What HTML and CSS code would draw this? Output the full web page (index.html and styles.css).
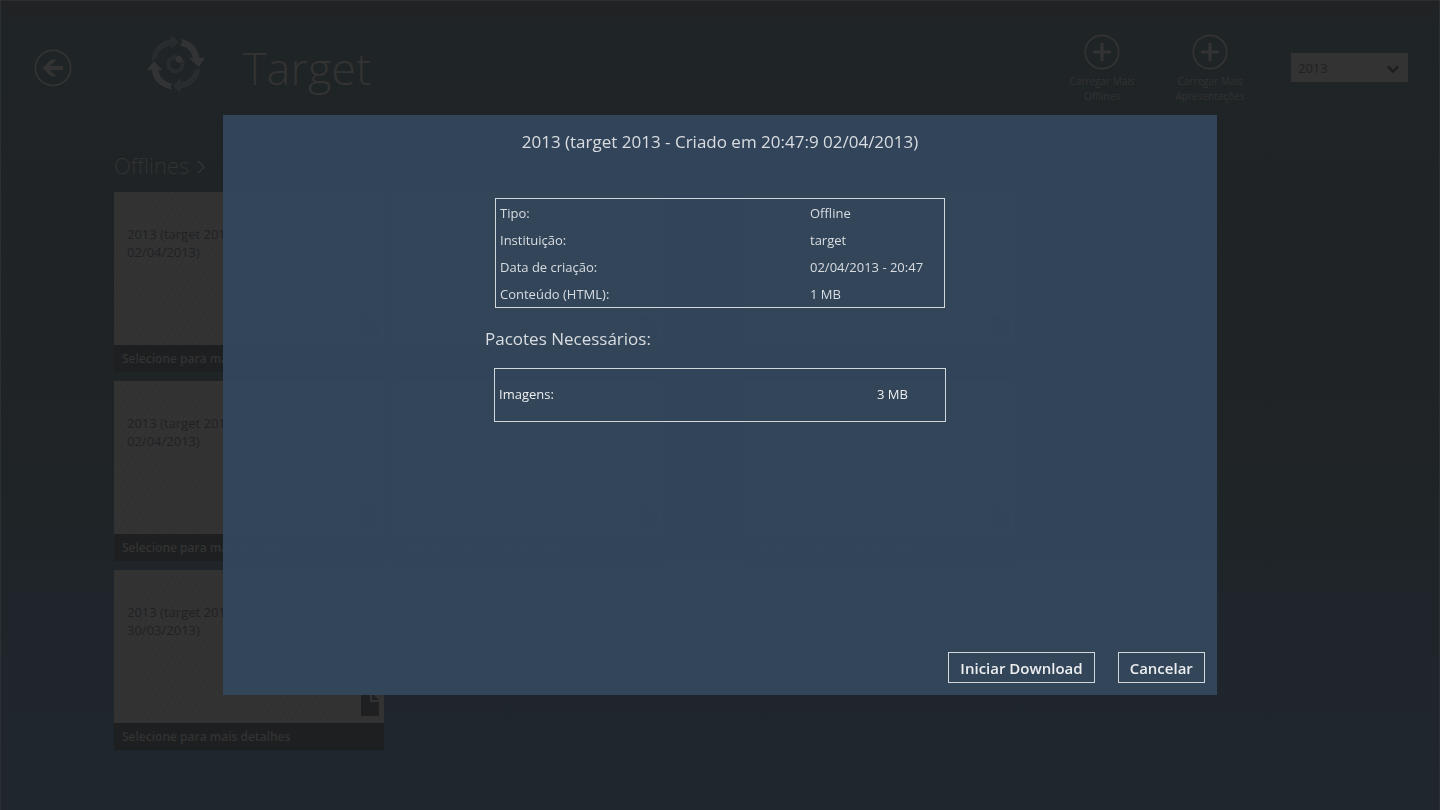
FILE: index.html
```html
<!DOCTYPE html>
<html lang="pt">
<head>
<meta charset="utf-8">
<title>Target</title>
<link rel="stylesheet" href="styles.css">
</head>
<body>
<svg class="sprite" aria-hidden="true">
  <symbol id="doc" viewBox="0 0 18 23"><path d="M0 0h9v9h9v14H0z"/><path d="M11 0l7 7h-7z"/></symbol>
  <symbol id="plus" viewBox="0 0 36 36"><circle cx="18" cy="18" r="16.7" fill="none" stroke="currentColor" stroke-width="1.8"/><path d="M16.4 9h3.2v7.4H27v3.2h-7.4V27h-3.2v-7.4H9v-3.2h7.4z" fill="currentColor"/></symbol>
  <symbol id="chevron" viewBox="0 0 8 14"><path d="M1 1l6 6-6 6" fill="none" stroke="currentColor" stroke-width="1.500"/></symbol>
</svg>
<div class="page">
  <header class="header">
    <button class="back" type="button" aria-label="Voltar">
      <svg viewBox="0 0 38 38"><circle cx="19" cy="19" r="17.6" fill="none" stroke="currentColor" stroke-width="1.800"/><path d="M8.500 19l8.500-8.500h5.500L16 17h13v4.200H16l6.500 6.300H17z" fill="currentColor"/></svg>
    </button>
    <svg class="logo" viewBox="0 0 60 60" aria-hidden="true">
      <path class="logo-dim" d="M23.700 .3L32.300 8l-8.600 7.500V11.500C17 13 11.500 17 9.700 23.700L4.700 27C5 15 13 7 23.700 5.500z"/>
      <path class="logo-lit" d="M33.700 5C44 6.500 51 14 52.300 23.700h5.500L52 33l-10.300-9.300h4C44 17 40 12.500 32.500 11.500l2.800-3z"/>
      <path class="logo-dim" d="M53.500 34c-1 11-9 19-19.800 20.500V59.500L25.700 52l8-8.500v5C40 47 45.500 43 47.300 36z"/>
      <path class="logo-lit" d="M25.300 55.500C14 54 6 47 4.700 36.300H-.3L7 27l8.500 9.300h-4C13 44 17.500 48.500 25.500 49.500l-2 3z"/>
      <circle class="logo-ring" cx="28.500" cy="30" r="7.300"/>
      <circle class="logo-lit" cx="32" cy="25.300" r="3.400"/>
    </svg>
    <h1 class="title">Target</h1>
    <nav class="actions">
      <button class="action" type="button"><svg><use href="#plus"/></svg><span>Carregar Mais Offlines</span></button>
      <button class="action" type="button"><svg><use href="#plus"/></svg><span>Carregar Mais Apresentações</span></button>
      <div class="year">
        <select aria-label="Ano"><option>2013</option></select>
        <svg viewBox="0 0 12 8" aria-hidden="true"><path d="M1 1.500l5 5 5-5" fill="none" stroke="currentColor" stroke-width="2.400"/></svg>
      </div>
    </nav>
  </header>
  <main class="groups">
    <section>
      <h2 class="group-title">Offlines <svg><use href="#chevron"/></svg></h2>
      <div class="cards">
        <article class="card"><div class="card-body"><p>2013 (target 2013 - Criado em 20:47:9 02/04/2013)</p><svg><use href="#doc"/></svg></div><div class="card-foot">Selecione para mais detalhes</div></article>
        <article class="card"><div class="card-body"><p>2013 (target 2013 - Criado em 1:25:2 02/04/2013)</p><svg><use href="#doc"/></svg></div><div class="card-foot">Selecione para mais detalhes</div></article>
        <article class="card"><div class="card-body"><p>2013 (target 2013 - Criado em 3:23:0 30/03/2013)</p><svg><use href="#doc"/></svg></div><div class="card-foot">Selecione para mais detalhes</div></article>
        <article class="card"><div class="card-body"><p>2013 (target 2013 - Criado em 1:25:2 27/03/2013)</p><svg><use href="#doc"/></svg></div><div class="card-foot">Selecione para mais detalhes</div></article>
        <article class="card"><div class="card-body"><p>2013 (target 2013 - Criado em 3:02:1 20/03/2013)</p><svg><use href="#doc"/></svg></div><div class="card-foot">Selecione para mais detalhes</div></article>
      </div>
    </section>
    <section>
      <h2 class="group-title">Apresentações <svg><use href="#chevron"/></svg></h2>
      <div class="cards">
        <article class="card"><div class="card-body"><p>Apresentação de Saúde (target 2013 - Criado em 17:08:12 09/05/2013)</p><svg><use href="#doc"/></svg></div><div class="card-foot">Selecione para mais detalhes</div></article>
        <article class="card"><div class="card-body"><p>Apresentação Teste (target 2013 - Criado em 17:07:57 09/05/2013)</p><svg><use href="#doc"/></svg></div><div class="card-foot">Selecione para mais detalhes</div></article>
      </div>
    </section>
  </main>
</div>
<div class="overlay">
  <div class="dialog" role="dialog" aria-modal="true" aria-labelledby="dialog-title">
    <h2 class="dialog-title" id="dialog-title">2013 (target 2013 - Criado em 20:47:9 02/04/2013)</h2>
    <div class="dialog-content">
      <table class="info">
        <tr><th scope="row">Tipo:</th><td>Offline</td></tr>
        <tr><th scope="row">Instituição:</th><td>target</td></tr>
        <tr><th scope="row">Data de criação:</th><td>02/04/2013 - 20:47</td></tr>
        <tr><th scope="row">Conteúdo (HTML):</th><td>1 MB</td></tr>
      </table>
      <h3 class="subtitle">Pacotes Necessários:</h3>
      <table class="info packages">
        <tr><th scope="row">Imagens:</th><td>3 MB</td></tr>
      </table>
    </div>
    <div class="dialog-actions">
      <button type="button">Iniciar Download</button>
      <button type="button">Cancelar</button>
    </div>
  </div>
</div>
</body>
</html>
```
FILE: styles.css
```css
* { box-sizing: border-box; }
body {
  margin: 0;
  font-family: "Open Sans", "Noto Sans", sans-serif;
  color: #333333;
  background: #1f2426;
}
h1, h2, h3, p { margin: 0; font-weight: 400; }
button, select { font: inherit; color: inherit; }
.sprite { position: absolute; width: 0; height: 0; }

.page {
  min-height: 100vh;
  border: 1px solid #2b3033;
  background: linear-gradient(#212224 0, #1f2426 24px, #1f2325 300px, #1f2427 500px, #1f252b 620px, #1f262d 100%);
}
.header {
  display: flex;
  align-items: flex-start;
  padding: 32px 31px 0 33px;
  height: 114px;
}
.back {
  width: 38px;
  height: 38px;
  margin-top: 16px;
  padding: 0;
  border: 0;
  background: none;
}
.back svg { display: block; }
.logo { width: 60px; height: 60px; margin: 1px 0 0 75px; overflow: visible; }
.logo-lit { fill: #323334; }
.logo-dim { fill: #292c2e; }
.logo-ring { fill: none; stroke: #292c2e; stroke-width: 4; }
.title {
  margin-left: 36px;
  font-size: 45px;
  line-height: 70px;
  font-weight: 300;
}
.actions { display: flex; margin-left: auto; }
.action {
  display: flex;
  flex-direction: column;
  align-items: center;
  gap: 4px;
  width: 108px;
  padding: 1px 18px 0;
  border: 0;
  background: none;
  font-size: 10px;
  line-height: 15px;
}
.action svg { width: 36px; height: 36px; }
.year { position: relative; width: 117px; margin: 20px 0 0 27px; }
.year select {
  appearance: none;
  display: block;
  width: 100%;
  height: 29px;
  padding: 0 7px;
  border: 0;
  border-radius: 0;
  background: #333333;
  color: #1f2224;
  font-size: 13px;
}
.year svg { position: absolute; right: 9px; top: 12px; width: 12px; height: 8px; color: #1b1d1f; pointer-events: none; }

.groups { display: flex; gap: 81px; padding: 32px 0 60px 113px; }
.group-title {
  display: flex;
  align-items: center;
  gap: 8px;
  height: 36px;
  margin-bottom: 9px;
  font-size: 22px;
  font-weight: 300;
}
.group-title svg { width: 8px; height: 14px; margin-top: 4px; }
.cards {
  display: grid;
  grid-auto-flow: column;
  grid-template-rows: repeat(3, auto);
  grid-auto-columns: 270px;
  gap: 9px;
}
.card-body {
  display: flex;
  flex-direction: column;
  justify-content: space-between;
  height: 153px;
  padding: 33px 5px 7px 13px;
  background: repeating-linear-gradient(120deg, #333333 0 2px, #313131 4px, #333333 5px);
  color: #1f2224;
  font-size: 13px;
  line-height: 18px;
  font-weight: 600;
}
.card-body svg { align-self: flex-end; width: 18px; height: 23px; fill: #1e2022; }
.card-foot {
  padding: 0 8px;
  background: #1e1f20;
  font-size: 12px;
  line-height: 27px;
  font-weight: 600;
}

.overlay {
  position: fixed;
  inset: 0;
  display: grid;
  padding: 115px 15.5%;
}
.dialog {
  display: flex;
  flex-direction: column;
  padding: 14px 12px 12px;
  background: rgba(52, 71, 92, .95);
  color: #d9dde1;
}
.dialog-title { text-align: center; font-size: 17px; line-height: 26px; }
.dialog-content { width: 470px; margin: 43px auto 0; }
.info {
  width: 450px;
  margin: 0 auto;
  border: 1px solid #d3d7dc;
  border-collapse: separate;
  border-spacing: 0;
  font-size: 13px;
  line-height: 25px;
}
.info th { padding: 2px 0 0 4px; text-align: left; font-weight: 400; }
.info td { width: 134px; padding: 2px 0 0; }
.subtitle { margin: 17px 0 16px; font-size: 17px; line-height: 27px; }
.packages { width: 452px; line-height: 50px; color: #eceef0; }
.packages th { padding: 0 0 2px 4px; }
.packages td { width: 68px; padding: 0 0 2px; }
.dialog-actions {
  display: flex;
  justify-content: flex-end;
  gap: 23px;
  margin-top: auto;
}
.dialog-actions button {
  height: 31px;
  padding: 0 11px;
  border: 1px solid #d3d7dc;
  background: none;
  color: #eceef0;
  font-size: 15px;
  font-weight: 600;
  line-height: 28px;
}
```
